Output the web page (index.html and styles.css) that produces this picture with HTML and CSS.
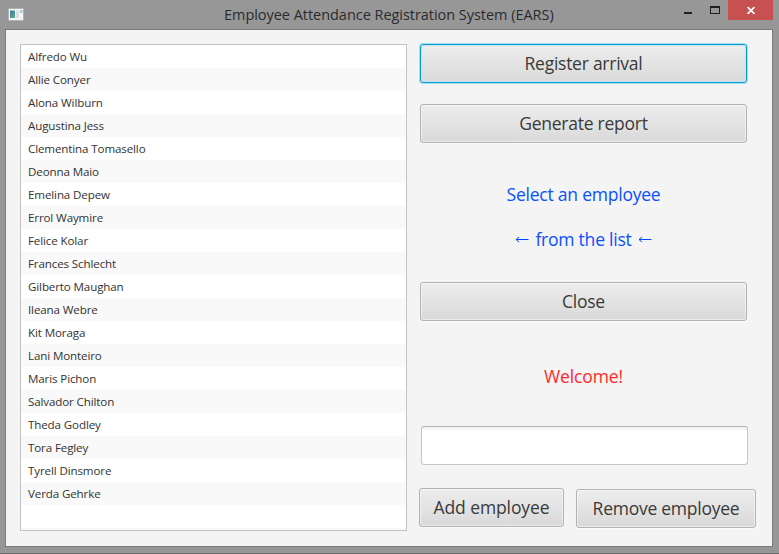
FILE: index.html
```html
<!DOCTYPE html>
<html lang="en">
<head>
<meta charset="utf-8">
<title>Employee Attendance Registration System (EARS)</title>
<link rel="stylesheet" href="styles.css">
</head>
<body>
<div class="window">
  <header class="titlebar">
    <svg class="app-icon" width="17" height="14" viewBox="0 0 17 14">
      <defs><linearGradient id="pane" x1="0" y1="0" x2="1" y2="1"><stop offset="0" stop-color="#4674a6"/><stop offset="1" stop-color="#58b38b"/></linearGradient></defs>
      <rect x="0.5" y="0.5" width="15" height="12" rx="1" fill="#f4f5f6" stroke="#b2b2b2"/>
      <rect x="2" y="2.500" width="5" height="7.500" fill="url(#pane)"/>
      <rect x="8" y="2.500" width="3" height="7.500" fill="#dedede"/>
      <rect x="12" y="2" width="2.500" height="3" fill="#9fd0cf"/>
    </svg>
    <h1 class="title">Employee Attendance Registration System (EARS)</h1>
    <div class="controls">
      <svg width="8" height="2" class="minimize"><rect width="8" height="2" fill="#1f1f1f"/></svg>
      <svg width="10" height="8" class="maximize"><path d="M0 0H10V8H0ZM1 2V7H9V2Z" fill="#1f1f1f" fill-rule="evenodd"/></svg>
      <button class="close" aria-label="Close window"><svg width="8" height="7" viewBox="0 0 8 7"><path d="M0.500 0L7.500 7M7.500 0L0.500 7" stroke="#fff" stroke-width="1.700"/></svg></button>
    </div>
  </header>
  <main class="content">
    <ul class="list">
      <li>Alfredo Wu</li><li>Allie Conyer</li><li>Alona Wilburn</li><li>Augustina Jess</li>
      <li>Clementina Tomasello</li><li>Deonna Maio</li><li>Emelina Depew</li><li>Errol Waymire</li>
      <li>Felice Kolar</li><li>Frances Schlecht</li><li>Gilberto Maughan</li><li>Ileana Webre</li>
      <li>Kit Moraga</li><li>Lani Monteiro</li><li>Maris Pichon</li><li>Salvador Chilton</li>
      <li>Theda Godley</li><li>Tora Fegley</li><li>Tyrell Dinsmore</li><li>Verda Gehrke</li>
      <li></li><li></li>
    </ul>
    <section class="panel">
      <button class="btn focused">Register arrival</button>
      <button class="btn report">Generate report</button>
      <p class="hint select">Select an employee</p>
      <p class="hint from"><svg class="arrow" width="14" height="7" viewBox="0 0 14 7"><path d="M13.500 3.500H1M4 1L1 3.500L4 6" fill="none" stroke="#0048ff"/></svg><span>from the list</span><svg class="arrow" width="14" height="7" viewBox="0 0 14 7"><path d="M13.500 3.500H1M4 1L1 3.500L4 6" fill="none" stroke="#0048ff"/></svg></p>
      <button class="btn quit">Close</button>
      <p class="hint welcome">Welcome!</p>
      <input class="field" type="text" aria-label="Employee name">
      <div class="actions">
        <button class="btn add">Add employee</button>
        <button class="btn remove">Remove employee</button>
      </div>
    </section>
  </main>
</div>
</body>
</html>
```
FILE: styles.css
```css
* { box-sizing: border-box; margin: 0; padding: 0; }
body { font-family: "Open Sans", "Noto Sans", sans-serif; overflow: hidden; }
.window { width: 779px; height: 554px; background: #979797; border-bottom: 1px solid #707070; padding: 0 6px 0 5px; }
.titlebar { height: 29px; display: flex; align-items: flex-start; }
.app-icon { margin: 8px 0 0 3px; flex: none; }
.title { width: 330px; margin-left: 199px; font-size: 14.5px; font-weight: 400; line-height: 20px; padding-top: 5px; color: #2b2b2f; white-space: nowrap; letter-spacing: -0.04px; }
.controls { margin-left: auto; display: flex; align-items: flex-start; }
.minimize { margin-top: 12px; }
.maximize { margin: 6px 8px 0 18px; }
.close { width: 45px; height: 20px; border: 0; background: #c75050; display: flex; justify-content: center; padding-top: 7px; }
.content { width: 768px; height: 518px; border: 1px solid #7c7c7c; background: #f4f4f4; display: flex; padding: 14px 0 0 14px; }
.list { width: 387px; height: 487px; border: 1px solid #c3c3c3; background: #fff; list-style: none; overflow: hidden; }
.list li { height: 23px; line-height: 23px; padding-left: 7px; font-size: 11.6px; color: #333; letter-spacing: -0.13px; }
.list li:nth-child(even) { background: #f9f9f9; }
.panel { width: 340px; margin-left: 13px; display: flex; flex-direction: column; align-items: flex-start; }
.btn { width: 327px; height: 39px; border: 1px solid #b2b2b2; border-radius: 3px; background: linear-gradient(#ededed, #d9d9d9); box-shadow: inset 0 0 0 1px rgba(255,255,255,.5), 0 1px 0 #fbfbfb; font: 400 17.5px/37px "Open Sans", "Noto Sans", sans-serif; letter-spacing: -0.25px; color: #3a3a3a; white-space: nowrap; flex: none; }
.focused { border-color: #039ed3; box-shadow: 0 0 0 1px #a5dcef, inset 0 0 0 1px #c4e5f0; }
.report { margin-top: 21px; }
.hint { width: 327px; height: 26px; font-size: 17.5px; letter-spacing: -0.22px; line-height: 26px; text-align: center; color: #0a50ff; white-space: nowrap; }
.select { margin-top: 38px; }
.from { margin-top: 19px; display: flex; justify-content: center; align-items: center; gap: 6px; }
.quit { margin-top: 30px; }
.welcome { margin-top: 42px; color: #ff2a2a; letter-spacing: -0.1px; }
.field { width: 327px; height: 39px; margin: 37px 0 0 1px; border: 1px solid #c6c6c6; border-top-color: #b5b5b5; border-radius: 3px; background: linear-gradient(#efefef, #fff 4px); outline: 0; }
.actions { display: flex; align-items: flex-start; gap: 12px; margin: 23px 0 0 -1px; }
.add { width: 145px; letter-spacing: -0.1px; }
.remove { width: 180px; margin-top: 1px; }
```
